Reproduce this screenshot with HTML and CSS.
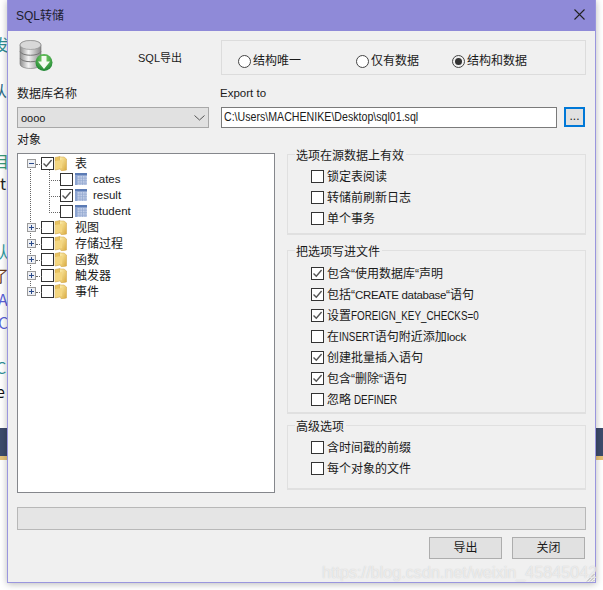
FILE: index.html
```html
<!DOCTYPE html>
<html lang="zh">
<head>
<meta charset="utf-8">
<title>SQL转储</title>
<link rel="stylesheet" href="styles.css">
</head>
<body>
<svg class="defs" width="0" height="0">
  <defs>
    <linearGradient id="fg" x1="0" y1="0" x2="1" y2="1"><stop offset="0" stop-color="#fff1b0"/><stop offset="1" stop-color="#d9a93c"/></linearGradient>
    <symbol id="folder" viewBox="0 0 13 15">
      <path d="M1 1.5 L6 0.5 L6 13 L1 14 Z" fill="#e8c25e" stroke="#c9a04a" stroke-width=".5"/>
      <path d="M5.5 1 L10 1 L12.5 3 L12.5 14 L7.5 15 L5.5 12 Z" fill="url(#fg)" stroke="#cfa245" stroke-width=".5"/>
      <path d="M1 5 L8 4 L8 12 L1 13.5 Z" fill="#f4d67f"/>
    </symbol>
    <symbol id="table" viewBox="0 0 12 12">
      <rect width="12" height="12" fill="#c3cfe8"/>
      <rect width="12" height="2.5" fill="#5b7bb5"/>
      <rect y="2.5" width="2.5" height="9.5" fill="#8aa3d2"/>
      <path d="M5 2.5V12M7.5 2.5V12M10 2.5V12M0 5.2H12M0 7.7H12M0 10.2H12" stroke="#92a8d0" stroke-width=".7"/>
    </symbol>
    <symbol id="tick" viewBox="0 0 13 13">
      <path d="M2.5 6.5 L5.3 9.3 L10.6 3" fill="none" stroke="#555" stroke-width="1.4"/>
    </symbol>
  </defs>
</svg>

<div class="backdrop-left">
  <span class="bg g1">发</span><span class="bg g2">从</span><span class="bg g3">目</span><span class="bg g4">t</span>
  <span class="bg g5">认</span><span class="bg g6">了</span><span class="bg g7">A</span><span class="bg g8">C</span>
  <span class="bg g9">C</span><span class="bg g10">e</span><div class="band"></div>
</div>
<div class="backdrop-right"><div class="band"></div></div>

<main class="window">
  <header class="titlebar">
    <span class="title">SQL转储</span>
    <svg class="close" width="11" height="11" viewBox="0 0 11 11"><path d="M.5.5 10.5 10.5M10.5.5 .5 10.5" stroke="#222" stroke-width="1.1"/></svg>
  </header>

  <div class="content">
    <section class="toprow">
      <svg class="dbicon" width="34" height="33" viewBox="0 0 34 33">
        <defs>
          <linearGradient id="dbg" x1="0" x2="1" y1="0" y2="0"><stop offset="0" stop-color="#8e8e8e"/><stop offset=".4" stop-color="#f4f4f4"/><stop offset="1" stop-color="#8a8a8a"/></linearGradient>
          <radialGradient id="gg" cx=".5" cy=".3" r=".8"><stop offset="0" stop-color="#7fd36a"/><stop offset="1" stop-color="#0f7a2a"/></radialGradient>
        </defs>
        <path d="M1 6 C1 0 22 0 22 6 V25 C22 31 1 31 1 25 Z" fill="url(#dbg)" stroke="#777" stroke-width=".6"/>
        <ellipse cx="11.500" cy="6" rx="10.500" ry="4.500" fill="#d8d8d8" stroke="#888" stroke-width=".6"/>
        <path d="M1 12.500 C3 17.500 20 17.500 22 12.500M1 19 C3 24 20 24 22 19" fill="none" stroke="#777"/>
        <circle cx="25" cy="23.500" r="8.500" fill="url(#gg)"/>
        <path d="M22.500 17 H27.500 V22.500 H31 L25 30 L19 22.500 H22.500 Z" fill="#f3fbf0"/>
      </svg>
      <span class="export-label">SQL导出</span>
      <div class="radiogroup">
        <label class="radio r1"><i class="dot"></i>结构唯一</label>
        <label class="radio r2"><i class="dot"></i>仅有数据</label>
        <label class="radio r3"><i class="dot on"></i>结构和数据</label>
      </div>
    </section>

    <section class="fieldrow">
      <div class="dbfield">
        <div class="lbl">数据库名称</div>
        <div class="select"><span>oooo</span>
          <svg width="11" height="6" viewBox="0 0 11 6"><path d="M.5.5 5.500 5 10.500.5" fill="none" stroke="#555"/></svg>
        </div>
      </div>
      <div class="pathfield">
        <div class="lbl latin">Export to</div>
        <div class="pathrow">
          <div class="input"><span class="path-text">C:\Users\MACHENIKE\Desktop\sql01.sql</span></div>
          <div class="browse">...</div>
        </div>
      </div>
    </section>

    <div class="lbl objects">对象</div>

    <section class="columns">
      <div class="tree">
        <div class="vline-root"></div>
        <div class="vline-child"></div>
        <div class="node"><i class="exp minus"></i><i class="cb"><svg><use href="#tick"/></svg></i><svg class="folder"><use href="#folder"/></svg><span>表</span></div>
        <div class="node child"><i class="cb"></i><svg class="tbl"><use href="#table"/></svg><span>cates</span></div>
        <div class="node child"><i class="cb"><svg><use href="#tick"/></svg></i><svg class="tbl"><use href="#table"/></svg><span>result</span></div>
        <div class="node child"><i class="cb"></i><svg class="tbl"><use href="#table"/></svg><span>student</span></div>
        <div class="node"><i class="exp plus"></i><i class="cb"></i><svg class="folder"><use href="#folder"/></svg><span>视图</span></div>
        <div class="node"><i class="exp plus"></i><i class="cb"></i><svg class="folder"><use href="#folder"/></svg><span>存储过程</span></div>
        <div class="node"><i class="exp plus"></i><i class="cb"></i><svg class="folder"><use href="#folder"/></svg><span>函数</span></div>
        <div class="node"><i class="exp plus"></i><i class="cb"></i><svg class="folder"><use href="#folder"/></svg><span>触发器</span></div>
        <div class="node"><i class="exp plus"></i><i class="cb"></i><svg class="folder"><use href="#folder"/></svg><span>事件</span></div>
      </div>

      <div class="options">
        <div class="group g-source">
          <div class="legend">选项在源数据上有效</div>
          <div class="opt"><i class="cb"></i>锁定表阅读</div>
          <div class="opt"><i class="cb"></i>转储前刷新日志</div>
          <div class="opt"><i class="cb"></i>单个事务</div>
        </div>
        <div class="group g-file">
          <div class="legend">把选项写进文件</div>
          <div class="opt"><i class="cb"><svg><use href="#tick"/></svg></i><span>包含“使用数据库“声明</span></div>
          <div class="opt"><i class="cb"><svg><use href="#tick"/></svg></i><span>包括“<span class="lat">CREATE database</span>“语句</span></div>
          <div class="opt"><i class="cb"><svg><use href="#tick"/></svg></i><span>设置<span class="cap">FOREIGN_KEY_CHECKS=0</span></span></div>
          <div class="opt"><i class="cb"></i><span>在<span class="cap cap-insert">INSERT</span>语句附近添加<span class="lat">lock</span></span></div>
          <div class="opt"><i class="cb"><svg><use href="#tick"/></svg></i><span>创建批量插入语句</span></div>
          <div class="opt"><i class="cb"><svg><use href="#tick"/></svg></i><span>包含“删除“语句</span></div>
          <div class="opt"><i class="cb"></i><span>忽略 <span class="cap">DEFINER</span></span></div>
        </div>
        <div class="group g-adv">
          <div class="legend">高级选项</div>
          <div class="opt"><i class="cb"></i>含时间戳的前缀</div>
          <div class="opt"><i class="cb"></i>每个对象的文件</div>
        </div>
      </div>
    </section>

    <div class="progress"></div>

    <footer class="actions">
      <div class="btn">导出</div>
      <div class="btn">关闭</div>
    </footer>
  </div>
  <svg class="grip" width="9" height="9" viewBox="0 0 9 9"><path d="M8.500 1 1 8.500M8.500 4 4 8.500M8.500 7 7 8.500" stroke="#aaa"/></svg>
</main>
<div class="watermark">https://blog.csdn.net/weixin_45845042</div>
</body>
</html>
```
FILE: styles.css
```css
* { box-sizing: border-box; }
html, body { margin: 0; height: 100%; }
body {
  position: relative;
  width: 603px;
  height: 590px;
  overflow: hidden;
  background: #fff;
  font: 12px/16px "Liberation Sans", "Noto Sans CJK SC", sans-serif;
  color: #1a1a1a;
}
.defs { position: absolute; }

/* page showing behind the dialog */
.backdrop-left, .backdrop-right { position: absolute; top: 0; height: 590px; overflow: hidden; }
.backdrop-left { left: 0; width: 8px; }
.backdrop-right { left: 596px; width: 7px; }
.band { position: absolute; left: 0; top: 428px; width: 100%; height: 32px; background: #3d4b6c; border-bottom: 4px solid #e6c27a; }
.bg { position: absolute; left: -7px; font-size: 16px; line-height: 18px; font-family: "Noto Sans CJK SC", sans-serif; }
.g1 { top: 35px; color: #2f8f95; }
.g2 { top: 81px; color: #2c6a86; left: -9px; }
.g3 { top: 152px; color: #3a9a7a; }
.g4 { top: 174px; color: #222; left: 0; }
.g5 { top: 242px; color: #2c9aa0; }
.g6 { top: 266px; color: #6b3b1a; }
.g7 { top: 290px; color: #5a62d8; left: -2px; }
.g8 { top: 313px; color: #5a62d8; left: -2px; }
.g9 { top: 358px; color: #2f8f95; left: -4px; }
.g10 { top: 382px; color: #111; left: -4px; }

/* dialog window */
.window {
  position: absolute;
  left: 7px;
  top: 0;
  width: 589px;
  height: 583px;
  background: #f0f0f0;
  border: 1px solid #9a96de;
  border-top: 0;
  box-shadow: 0 1px 7px rgba(0, 0, 0, .28);
}
.titlebar {
  height: 31px;
  background: #8f8ad8;
  display: flex;
  align-items: center;
  justify-content: space-between;
  padding: 0 10px 0 8px;
}
.title { font-size: 12px; color: #1c1c2c; }
.close { display: block; margin-bottom: 2px; }

.content { padding: 8px 9px 0 9px; }

.toprow { display: flex; align-items: flex-start; height: 36px; }
.dbicon { margin-left: 2px; flex: none; }
.export-label { margin: 11px 0 0 85px; width: 83px; flex: none; font-size: 11px; }
.radiogroup {
  width: 365px;
  height: 35px;
  margin-top: 1px;
  border: 1px solid #dcdcdc;
  position: relative;
  font-size: 12px;
}
.radio { position: absolute; top: 12px; display: flex; align-items: center; gap: 2px; }
.r1 { left: 16px; }
.r2 { left: 134px; }
.r3 { left: 230px; }
.dot { width: 13px; height: 13px; border-radius: 50%; border: 1px solid #444; background: #fff; display: block; position: relative; flex: none; }
.dot.on { background: #f0f0f0; }
.dot.on::after { content: ""; position: absolute; left: 2px; top: 2px; width: 7px; height: 7px; border-radius: 50%; background: #333; }

.fieldrow { display: flex; gap: 12px; margin-top: 11px; }
.dbfield { width: 192px; }
.pathfield { width: 365px; }
.lbl { height: 16px; line-height: 16px; font-size: 12px; }
.latin { margin-left: -1px; font-size: 11.5px; line-height: 14px; }
.select {
  margin-top: 5px;
  height: 21px;
  background: #e1e1e1;
  border: 1px solid #a8a8a8;
  display: flex;
  align-items: center;
  justify-content: space-between;
  padding: 0 3px 0 3px;
  font-size: 11px;
}
.pathrow { display: flex; margin-top: 5px; gap: 7px; align-items: flex-start; }
.input {
  width: 336px;
  height: 21px;
  background: #fff;
  border: 1px solid #7a7a7a;
  line-height: 18px;
  padding-left: 2px;
  font-size: 12px;
  white-space: nowrap;
}
.path-text { display: inline-block; transform: scaleX(.885); transform-origin: 0 50%; }
.browse {
  width: 21px;
  height: 20px;
  background: #e1e1e1;
  border: 2px solid #0078d7;
  text-align: center;
  line-height: 15px;
  font-size: 12px;
}
.objects { margin-top: 4px; }

.columns { display: flex; margin-top: 5px; gap: 12px; height: 340px; }

.tree {
  position: relative;
  width: 258px;
  height: 340px;
  background: #fff;
  border: 1px solid #85878c;
  padding: 1px 0 0 8px;
  font-size: 12px;
}
.node { display: flex; align-items: center; height: 16px; position: relative; }
.node > span { white-space: nowrap; margin-top: 2px; }
.child > span { font-size: 11.5px; margin-top: 0; }
.exp {
  width: 9px;
  height: 9px;
  border: 1px solid #9a9a9a;
  background: #eef0f4;
  display: block;
  position: relative;
  margin: 0 5px 0 1px;
  flex: none;
}
.exp::before { content: ""; position: absolute; left: 1px; top: 3px; width: 5px; height: 1px; background: #2a4a8a; }
.plus::after { content: ""; position: absolute; left: 3px; top: 1px; width: 1px; height: 5px; background: #2a4a8a; }
.node > .exp + .cb::before { content: ""; position: absolute; left: -6px; top: 6px; width: 6px; border-top: 1px dotted #666; }
.cb {
  width: 13px;
  height: 13px;
  border: 1px solid #333;
  background: #fff;
  display: block;
  position: relative;
  flex: none;
}
.cb svg { position: absolute; left: -1px; top: -1px; width: 13px; height: 13px; display: block; }
.folder { width: 13px; height: 15px; flex: none; margin-right: 8px; }
.tbl { width: 12px; height: 12px; flex: none; margin: 0 6px 0 2px; }
.child { padding-left: 34px; }
.child .cb::before { content: ""; position: absolute; left: -12px; top: 6px; width: 11px; border-top: 1px dotted #666; }
.vline-root { position: absolute; left: 12px; top: 13px; height: 123px; border-left: 1px dotted #666; }
.vline-child { position: absolute; left: 31px; top: 14px; height: 43px; border-left: 1px dotted #666; }

.options { width: 299px; display: flex; flex-direction: column; }
.group { border: 2px solid #e0e0e0; border-width: 1px 1px 2px 1px; padding-left: 23px; }
.g-source { height: 81px; margin-top: 1px; }
.g-file { height: 164px; margin-top: 15px; }
.g-adv { height: 65px; margin-top: 11px; }
.legend {
  width: fit-content;
  height: 16px;
  margin: -7px 0 2px -16px;
  padding: 0 2px 0 1px;
  background: #f0f0f0;
  font-size: 12px;
}
.g-file .legend { margin-bottom: 3px; }
.g-adv .legend { margin-bottom: 2px; }
.opt { display: flex; align-items: center; gap: 3px; height: 21px; white-space: nowrap; font-size: 12px; }
.lat { font-size: 11.5px; letter-spacing: -.35px; }
.cap { display: inline-block; font-size: 12px; transform: scaleX(.82); transform-origin: 0 50%; }
.cap-insert { margin-right: -8px; }

.progress { height: 23px; margin-top: 14px; background: #e5e5e5; border: 1px solid #b8b8b8; }
.actions { display: flex; justify-content: flex-end; gap: 10px; margin: 7px 1px 0 0; }
.btn {
  width: 73px;
  height: 22px;
  background: #e1e1e1;
  border: 1px solid #adadad;
  text-align: center;
  line-height: 20px;
  font-size: 12px;
}
.grip { position: absolute; right: 0; bottom: 0; }
.watermark {
  position: absolute;
  left: 322px;
  top: 563px;
  font: 16px/20px "Liberation Sans", sans-serif;
  letter-spacing: .08px;
  color: rgba(255, 255, 255, .6);
  text-shadow: 0 0 1px rgba(170, 170, 170, .6);
  white-space: nowrap;
}
```
